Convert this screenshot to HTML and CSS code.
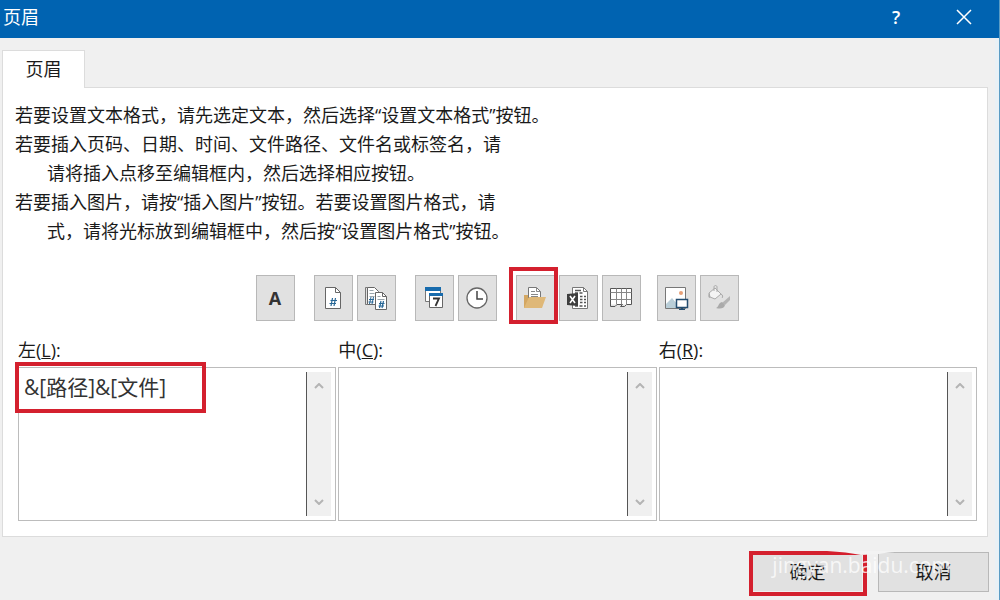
FILE: index.html
```html
<!DOCTYPE html>
<html lang="zh-CN">
<head>
<meta charset="utf-8">
<meta name="viewport" content="width=device-width, initial-scale=1">
<title>页眉</title>
<link rel="stylesheet" href="styles.css">
</head>
<body>
<div class="dialog" role="dialog" aria-labelledby="dialog-title">
  <header class="titlebar">
    <h1 class="title" id="dialog-title">页眉</h1>
    <button class="title-button" type="button" aria-label="帮助">?</button>
    <button class="title-button" type="button" aria-label="关闭">
      <svg width="16" height="16" viewBox="0 0 16 16" fill="none" stroke="currentColor" stroke-width="1.5"><path d="M1 1l14 14M15 1L1 15"/></svg>
    </button>
  </header>

  <main class="content">
    <div class="tabs" role="tablist">
      <button class="tab" type="button" role="tab" aria-selected="true">页眉</button>
    </div>
    <section class="panel" role="tabpanel">
      <div class="help">
        <p>若要设置文本格式，请先选定文本，然后选择“设置文本格式”按钮。</p>
        <p>若要插入页码、日期、时间、文件路径、文件名或标签名，请</p>
        <p class="indent">请将插入点移至编辑框内，然后选择相应按钮。</p>
        <p>若要插入图片，请按“插入图片”按钮。若要设置图片格式，请</p>
        <p class="indent">式，请将光标放到编辑框中，然后按“设置图片格式”按钮。</p>
      </div>

      <div class="toolbar" role="toolbar" aria-label="插入">
        <div class="group">
          <button class="tool letter" type="button" aria-label="设置文本格式">A</button>
        </div>
        <div class="group">
          <button class="tool" type="button" aria-label="插入页码">
            <svg width="26" height="26" viewBox="0 0 26 26" fill="none"><path d="M5.500 2.500h10l5 5v16h-15z" fill="#fff" stroke="#666"/><path d="M15.500 2.500v5h5" stroke="#666"/><path d="M12.500 13l-1.500 8M15.500 13l-1.500 8M10.500 15.500h6.500M9.500 18.500h6.500" stroke="#286796" stroke-width="1.200"/></svg>
          </button>
          <button class="tool" type="button" aria-label="插入页数">
            <svg width="26" height="26" viewBox="0 0 26 26" fill="none"><path d="M4.500 19.500h-2v-17h2" stroke="#777"/><path d="M4.500 2.500h7l4 4v13h-11z" fill="#fff" stroke="#666"/><path d="M6.500 5.500h4M6.500 8.500h5M6.500 11.500h5" stroke="#9aa6ad"/><path d="M8 12l-1.500 7M10.500 12L9 19M6 14.500h5M5.500 17h5" stroke="#286796"/><path d="M12.500 7.500h7l4 4v13h-11z" fill="#fff" stroke="#666"/><path d="M19.500 7.500v4h4" stroke="#666"/><path d="M14.500 11.500h3M14.500 14.500h7" stroke="#9aa6ad"/><path d="M18 16l-1.500 7M20.500 16L19 23M16 18.500h5.500M15.500 21h5.500" stroke="#286796" stroke-width="1.200"/></svg>
          </button>
        </div>
        <div class="group">
          <button class="tool" type="button" aria-label="插入日期">
            <svg width="26" height="26" viewBox="0 0 26 26"><path d="M4.500 3.500h15v13h-15z" fill="#fff" stroke="#777"/><path d="M4 2h16v4H4z" fill="#176bad"/><path d="M8.500 8.500h13v14h-13z" fill="#fff" stroke="#666"/><path d="M8 8h14v3H8z" fill="#176bad"/><path d="M12 13.500h6l-3.500 7.500" fill="none" stroke="#333" stroke-width="1.800"/></svg>
          </button>
          <button class="tool" type="button" aria-label="插入时间">
            <svg width="26" height="26" viewBox="0 0 26 26" fill="none"><circle cx="13" cy="13" r="10" fill="#fff" stroke="#666" stroke-width="1.300"/><path d="M13 6v8h6" stroke="#444" stroke-width="1.500"/></svg>
          </button>
        </div>
        <div class="group">
          <button class="tool marked" type="button" aria-label="插入文件路径">
            <svg width="26" height="26" viewBox="0 0 26 26" fill="none"><path d="M6.500 15V2.500h8l4 4V15z" fill="#fff" stroke="#777"/><path d="M14.500 2.500v4h4M9 6.500h4M9 9.500h7M9 11.500h7" stroke="#888"/><path d="M2 10h4v3h1v10H2z" fill="#d4a762"/><path d="M7 12h17l-4 11H2z" fill="#dfb878"/></svg>
          </button>
          <button class="tool" type="button" aria-label="插入文件名">
            <svg width="26" height="26" viewBox="0 0 26 26" fill="none"><path d="M7.500 2.500h11l4 4v17h-15z" fill="#fff" stroke="#777"/><path d="M18.500 2.500v4h4" stroke="#777"/><path d="M10 5.500h6M10 8h3M14.500 8h3M15 11.500h2.500M19 11.500h2M15 14.500h2.500M19 14.500h2M15 17.500h2.500M19 17.500h2M10 21h3M14.500 21h3M19 21h2" stroke="#555" stroke-width="1.500"/><path d="M2 9l11-1v13L2 20z" fill="#3e3e3e"/><path d="M5 11l5 7M10 11l-5 7" stroke="#fff" stroke-width="1.600"/></svg>
          </button>
          <button class="tool" type="button" aria-label="插入数据表名称">
            <svg width="26" height="26" viewBox="0 0 26 26" fill="none"><path d="M2.500 3.500h21v16h-21z" fill="#fff"/><path d="M2.500 3.500h21v16h-5l-2 2h-4l2-2H9l-2 2H2.500z" stroke="#555"/><path d="M8.500 3.500v16M13.500 3.500v16M18.500 3.500v16M2.500 7.500h21M2.500 14.500h21" stroke="#888"/></svg>
          </button>
        </div>
        <div class="group">
          <button class="tool" type="button" aria-label="插入图片">
            <svg width="26" height="26" viewBox="0 0 26 26"><path d="M2.500 2.500h20v21h-20z" fill="#fff" stroke="#777"/><circle cx="18" cy="8" r="2" fill="#e8a078"/><path d="M3 23v-4l6-6 6 7v3z" fill="#b9ced8"/><path d="M13.500 14.500h11v8h-11z" fill="#fff" stroke="#244d70" stroke-width="1.500"/><path d="M18 23h2v1h2v1h-6v-1h2z" fill="#244d70"/></svg>
          </button>
          <button class="tool" type="button" aria-label="设置图片格式">
            <svg width="26" height="26" viewBox="0 0 26 26" fill="none"><path d="M3 8l6-5 6 6-6 5-5-2z" fill="#f4f4f4" stroke="#aaa"/><path d="M8 6V2c0-2 3-2 3 0v5" stroke="#aaa"/><path d="M3 8c-1 2-1 5 1 5V9z" fill="#aaa"/><path d="M15 9c2 1 2 3 1 4" stroke="#aaa"/><path d="M24 11v4l-5 5-3-2z" fill="#b4b4b4"/><path d="M16 17l3 3c-1 4-5 4-9 3 3-1 2-5 6-6z" fill="#aaa"/></svg>
          </button>
        </div>
      </div>

      <div class="sections">
        <div class="section">
          <label for="left">左(<u>L</u>):</label>
          <div class="editor marked">
            <textarea id="left" accesskey="l">&amp;[路径]&amp;[文件]</textarea>
            <div class="scroll">
              <button type="button" aria-label="向上滚动"><svg width="10" height="6" viewBox="0 0 10 6"><path d="M1 5l4-4 4 4"/></svg></button>
              <button type="button" aria-label="向下滚动"><svg width="10" height="6" viewBox="0 0 10 6"><path d="M1 1l4 4 4-4"/></svg></button>
            </div>
          </div>
        </div>
        <div class="section">
          <label for="center">中(<u>C</u>):</label>
          <div class="editor">
            <textarea id="center" accesskey="c"></textarea>
            <div class="scroll">
              <button type="button" aria-label="向上滚动"><svg width="10" height="6" viewBox="0 0 10 6"><path d="M1 5l4-4 4 4"/></svg></button>
              <button type="button" aria-label="向下滚动"><svg width="10" height="6" viewBox="0 0 10 6"><path d="M1 1l4 4 4-4"/></svg></button>
            </div>
          </div>
        </div>
        <div class="section">
          <label for="right">右(<u>R</u>):</label>
          <div class="editor">
            <textarea id="right" accesskey="r"></textarea>
            <div class="scroll">
              <button type="button" aria-label="向上滚动"><svg width="10" height="6" viewBox="0 0 10 6"><path d="M1 5l4-4 4 4"/></svg></button>
              <button type="button" aria-label="向下滚动"><svg width="10" height="6" viewBox="0 0 10 6"><path d="M1 1l4 4 4-4"/></svg></button>
            </div>
          </div>
        </div>
      </div>
    </section>
  </main>

  <footer class="actions">
    <button class="action marked" type="button">确定</button>
    <button class="action" type="button">取消</button>
    <svg class="swoosh" width="84" height="4" viewBox="0 0 84 4"><path d="M0 0h84Q62 1 52 3L34 4Q20 1 0 0z" fill="#f3f3f3"/></svg>
    <span class="watermark">jingyan.baidu.com</span>
  </footer>
</div>
</body>
</html>
```

FILE: styles.css
```css
*,
*::after {
  box-sizing: border-box;
}

body {
  margin: 0;
  background: #f0f0f0;
  color: #1a1a1a;
  font: 18px/29px "Open Sans", "Noto Sans CJK SC", sans-serif;
}

button,
textarea {
  margin: 0;
  padding: 0;
  border: 0;
  border-radius: 0;
  background: none;
  color: inherit;
  font: inherit;
}

svg {
  display: block;
}

.dialog {
  display: flex;
  flex-direction: column;
  min-height: 100vh;
  border-right: 1px solid #5b9cc4;
}

.titlebar {
  display: flex;
  align-items: center;
  height: 38px;
  padding: 0 1px 4px 3px;
  background: #0063b1;
  color: #fff;
}

.title {
  flex: 1;
  margin: 0;
  font-size: 18px;
  font-weight: 400;
}

.title-button {
  display: grid;
  place-items: center;
  width: 68px;
  height: 34px;
  font-weight: 600;
}

.content {
  padding: 12px 7px 0 2px;
  border-right: 4px solid #e9f1f6;
}

.tabs {
  display: flex;
}

.tab {
  position: relative;
  z-index: 1;
  width: 83px;
  height: 38px;
  margin-bottom: -1px;
  border: 1px solid #dcdcdc;
  border-bottom: 0;
  background: #fff;
}

.panel {
  padding: 13px 10px 15px 12px;
  border: 1px solid #dcdcdc;
  background: #fff;
}

.help p {
  margin: 0;
}

.help .indent {
  padding-left: 32px;
}

.toolbar {
  display: flex;
  justify-content: center;
  gap: 19px;
  margin: 29px 0 15px;
  padding-left: 2px;
}

.group {
  display: flex;
  gap: 4px;
}

.group:last-child {
  margin-left: -3px;
}

.tool {
  display: grid;
  place-items: center;
  position: relative;
  width: 39px;
  height: 46px;
  border: 1px solid #b8b8b8;
  background: #e1e1e1;
}

.letter {
  color: #333;
  font-weight: 700;
}

.marked {
  position: relative;
}

.marked::after {
  content: "";
  position: absolute;
  z-index: 2;
  border: 4px solid #d4202e;
  pointer-events: none;
}

.tool.marked::after {
  inset: -9px -4px -4px -8px;
}

.sections {
  display: grid;
  grid-template-columns: repeat(3, 1fr);
  gap: 2px;
  padding-left: 3px;
}

.section {
  min-width: 0;
}

.section label {
  display: block;
  height: 31px;
}

.editor {
  display: flex;
  height: 154px;
  padding: 4px 4px 4px 5px;
  border: 1px solid #bcbcbc;
}

.editor textarea {
  flex: 1;
  min-width: 0;
  resize: none;
  overflow: hidden;
  outline: 0;
  color: #333;
  font-size: 21px;
  line-height: 31px;
}

.editor.marked::after {
  top: -6px;
  left: -4px;
  width: 191px;
  height: 51px;
}

.scroll {
  display: flex;
  flex-direction: column;
  justify-content: space-between;
  width: 25px;
  border-left: 1px solid #555;
  background: #f0f0f0;
}

.scroll button {
  display: grid;
  place-items: center;
  height: 28px;
}

.scroll path {
  fill: none;
  stroke: #b4b4b4;
  stroke-width: 2;
}

.actions {
  flex: 1;
  display: flex;
  justify-content: flex-end;
  align-items: flex-start;
  gap: 15px;
  position: relative;
  padding: 15px 6px 8px;
  border-right: 4px solid #e9f1f6;
}

.action {
  width: 111px;
  height: 40px;
  border: 1px solid #b8b8b8;
  background: #e1e1e1;
}

.action.marked {
  border-color: #f0f0f0;
}

.action.marked::after {
  inset: -2px -5px -5px -4px;
}

.swoosh {
  position: absolute;
  z-index: 3;
  top: 14px;
  right: 84px;
}

.watermark {
  position: absolute;
  z-index: 3;
  top: 14px;
  right: 44px;
  color: rgba(255, 255, 255, 0.75);
  font-size: 21px;
  pointer-events: none;
}
```
